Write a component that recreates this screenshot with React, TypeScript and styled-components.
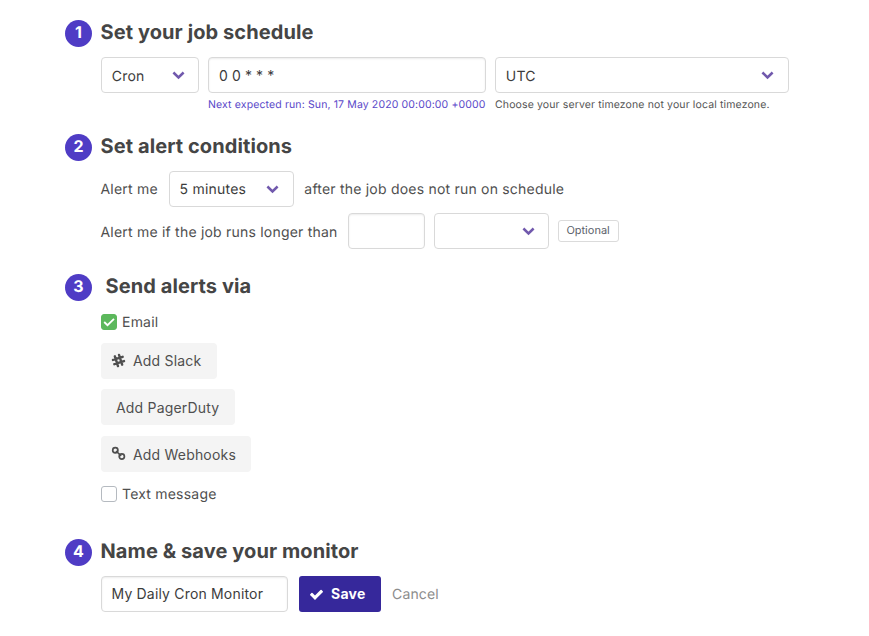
import React from "react";
import styled, { createGlobalStyle } from "styled-components";

const GlobalStyle = createGlobalStyle`
  * { box-sizing: border-box; }
  body {
    margin: 0;
    background: #fff;
    color: #4f4f4f;
    font-family: Inter, "Liberation Sans", sans-serif;
    font-size: 14px;
    line-height: 18px;
    letter-spacing: 0.21px;
    -webkit-font-smoothing: antialiased;
    text-rendering: geometricPrecision;
  }
`;

const Form = styled.main`
  padding: 20px 0 0 65px;
  height: 636px;
  overflow: hidden;
`;

const Section = styled.section<{ $height: number }>`
  height: ${(p) => p.$height}px;
`;

const SectionHeader = styled.header<{ $gap?: number; $height?: number }>`
  display: flex;
  align-items: flex-start;
  gap: ${(p) => p.$gap ?? 8.5}px;
  height: ${(p) => p.$height ?? 37}px;
`;

const StepNumber = styled.span`
  width: 27px;
  height: 27px;
  border-radius: 50%;
  background: #4f3cc5;
  color: #fff;
  font-size: 16px;
  font-weight: 700;
  line-height: 25px;
  text-align: center;
  letter-spacing: 0;
`;

const Title = styled.h2`
  margin: 0;
  font-size: 20px;
  line-height: 24px;
  font-weight: 700;
  letter-spacing: 0.09px;
  color: #454545;
`;

const Body = styled.div`
  padding-left: 36px;
`;

const Row = styled.div<{ $gap?: number }>`
  display: flex;
  align-items: center;
  gap: ${(p) => p.$gap ?? 9}px;
`;

const ScheduleRow = styled.div`
  display: grid;
  grid-template-columns: 98px 278px 294px;
  column-gap: 9px;
`;

const ConditionRow = styled(Row)`
  height: 36px;
  margin-bottom: 6px;
`;

const Control = styled.div<{ $width?: number; $right?: number }>`
  display: flex;
  align-items: center;
  justify-content: space-between;
  width: ${(p) => (p.$width ? `${p.$width}px` : "100%")};
  height: 36px;
  padding: 0 ${(p) => p.$right ?? 14}px 0 10px;
  border: 1px solid #d9d9d9;
  border-radius: 4px;
  background: #fff;
  color: #3c3c3c;
  white-space: nowrap;
`;

const TextField = styled.input<{ $width?: number }>`
  width: ${(p) => (p.$width ? `${p.$width}px` : "100%")};
  height: 36px;
  padding: 0 9.5px 1px;
  border: 1px solid #d9d9d9;
  border-radius: 4px;
  box-shadow: inset 0 1px 2px rgba(10, 10, 10, 0.08);
  color: #3c3c3c;
  font: inherit;
  letter-spacing: 0.18px;
  outline: none;
`;

const CronField = styled(TextField)`
  padding: 0 10px;
  letter-spacing: 0.1px;
`;

const Hint = styled.p<{ $accent?: boolean }>`
  margin: 5px 0 0;
  font-size: 10.5px;
  line-height: 13px;
  letter-spacing: 0.13px;
  white-space: nowrap;
  color: ${(p) => (p.$accent ? "#5a48c9" : "#555")};
`;

const Label = styled.span<{ $right?: number; $drop?: number }>`
  white-space: nowrap;
  margin-left: -0.5px;
  margin-right: ${(p) => p.$right ?? 0}px;
  padding-top: ${(p) => p.$drop ?? 2}px;
`;

const Value = styled.span<{ $drop: number }>`
  margin-left: -0.25px;
  padding-top: ${(p) => p.$drop}px;
`;

const Tag = styled.span`
  height: 22px;
  width: 61px;
  border: 1px solid #dbdbdb;
  border-radius: 3px;
  font-size: 11px;
  line-height: 19px;
  letter-spacing: 0;
  text-align: center;
  color: #5c626b;
`;

const CheckLine = styled.label`
  display: flex;
  align-items: center;
  gap: 5.5px;
  height: 16px;
`;

const Box = styled.span<{ $checked?: boolean }>`
  display: flex;
  width: 16px;
  height: 16px;
  border-radius: 3px;
  border: 1px solid ${(p) => (p.$checked ? "#5cb85c" : "#b5bac0")};
  background: ${(p) => (p.$checked ? "#5cb85c" : "#fff")};
`;

const Channels = styled.div`
  display: flex;
  flex-direction: column;
  align-items: flex-start;
  margin: 13px 0 14px;
`;

const ChannelButton = styled.button<{ $width: number; $plain?: boolean }>`
  display: flex;
  align-items: center;
  gap: 7.5px;
  width: ${(p) => p.$width}px;
  height: 36px;
  margin-bottom: ${(p) => (p.$plain ? 11 : 10)}px;
  padding: 0 0 0 ${(p) => (p.$plain ? 15.5 : 10)}px;
  border: 0;
  border-radius: 4px;
  background: #f4f4f4;
  color: #4f4f4f;
  font: inherit;
  letter-spacing: 0.19px;
  white-space: nowrap;

  &:last-child {
    margin-bottom: 0;
  }

  svg {
    margin-bottom: 2px;
  }
`;

const SaveButton = styled.button`
  display: flex;
  align-items: center;
  gap: 7px;
  width: 82px;
  height: 36px;
  padding: 0 0 0 10px;
  border: 0;
  border-radius: 3px;
  background: #36289b;
  color: #fff;
  font: inherit;
  font-weight: 700;
  letter-spacing: 0.25px;
`;

const Cancel = styled.a`
  padding-top: 2px;
  color: #8c8c8c;
  letter-spacing: 0.17px;
`;

const Chevron = () => (
  <svg width="13" height="9" viewBox="0 0 13 9" fill="none">
    <path d="M1.4 1.5 6.5 6.5 11.6 1.5" stroke="#7159ad" strokeWidth="2.5" />
  </svg>
);

const SlackIcon = () => (
  <svg width="15" height="15" viewBox="0 0 15 15" fill="none">
    <g transform="rotate(-18 7.5 7.5)" stroke="currentColor" strokeWidth="2.4" strokeLinecap="round">
      <path d="M5.3 2.4v10.2M9.7 2.4v10.2M2.4 5.3h10.2M2.4 9.7h10.2" />
    </g>
  </svg>
);

const ChainIcon = () => (
  <svg width="15" height="15" viewBox="0 0 15 15" fill="none" stroke="currentColor" strokeWidth="1.7">
    <circle cx="4.3" cy="4.2" r="2.6" />
    <circle cx="10.8" cy="10.5" r="2.6" />
    <path d="M5 5 10.2 9.8" />
  </svg>
);

const CheckIcon = () => (
  <svg width="15" height="15" viewBox="0 0 1792 1792" fill="currentColor">
    <path d="M1671 566q0 40-28 68l-724 724-136 136q-28 28-68 28t-68-28l-136-136-362-362q-28-28-28-68t28-68l136-136q28-28 68-28t68 28l294 295 656-657q28-28 68-28t68 28l136 136q28 28 28 68z" />
  </svg>
);

const Header = ({ step, title, gap, height }: { step: number; title: string; gap?: number; height?: number }) => (
  <SectionHeader $gap={gap} $height={height}>
    <StepNumber>{step}</StepNumber>
    <Title>{title}</Title>
  </SectionHeader>
);

const Select = ({
  value,
  width,
  right,
  drop = 4,
}: {
  value?: string;
  width?: number;
  right?: number;
  drop?: number;
}) => (
  <Control $width={width} $right={right}>
    <Value $drop={drop}>{value}</Value>
    <Chevron />
  </Control>
);

export default function App() {
  return (
    <>
      <GlobalStyle />
      <Form>
        <Section $height={114}>
          <Header step={1} title="Set your job schedule" />
          <Body>
            <ScheduleRow>
              <Select value="Cron" right={13} />
              <div>
                <CronField defaultValue="0 0 * * *" />
                <Hint $accent>Next expected run: Sun, 17 May 2020 00:00:00 +0000</Hint>
              </div>
              <div>
                <Select value="UTC" />
                <Hint>Choose your server timezone not your local timezone.</Hint>
              </div>
            </ScheduleRow>
          </Body>
        </Section>

        <Section $height={140}>
          <Header step={2} title="Set alert conditions" />
          <Body>
            <ConditionRow $gap={11}>
              <Label>Alert me</Label>
              <Select value="5 minutes" width={125} drop={2} />
              <Label>after the job does not run on schedule</Label>
            </ConditionRow>
            <ConditionRow>
              <Label $right={1} $drop={4}>Alert me if the job runs longer than</Label>
              <TextField $width={77} />
              <Select width={115} right={13} />
              <Tag>Optional</Tag>
            </ConditionRow>
          </Body>
        </Section>

        <Section $height={265}>
          <Header step={3} title="Send alerts via" gap={13.5} height={40} />
          <Body>
            <CheckLine>
              <Box $checked>
                <svg width="14" height="14" viewBox="0 0 14 14" fill="none">
                  <path d="M2.2 7 5.5 10.2 12 3.8" stroke="#fff" strokeWidth="1.8" />
                </svg>
              </Box>
              <Label>Email</Label>
            </CheckLine>
            <Channels>
              <ChannelButton $width={116}>
                <SlackIcon />
                <Label $drop={0}>Add Slack</Label>
              </ChannelButton>
              <ChannelButton $width={134} $plain>
                <Label>Add PagerDuty</Label>
              </ChannelButton>
              <ChannelButton $width={150}>
                <ChainIcon />
                <Label>Add Webhooks</Label>
              </ChannelButton>
            </Channels>
            <CheckLine>
              <Box />
              <Label>Text message</Label>
            </CheckLine>
          </Body>
        </Section>

        <Section $height={97}>
          <Header step={4} title="Name &amp; save your monitor" />
          <Body>
            <Row $gap={11}>
              <TextField $width={187} defaultValue="My Daily Cron Monitor" />
              <SaveButton>
                <CheckIcon />
                Save
              </SaveButton>
              <Cancel>Cancel</Cancel>
            </Row>
          </Body>
        </Section>
      </Form>
    </>
  );
}
